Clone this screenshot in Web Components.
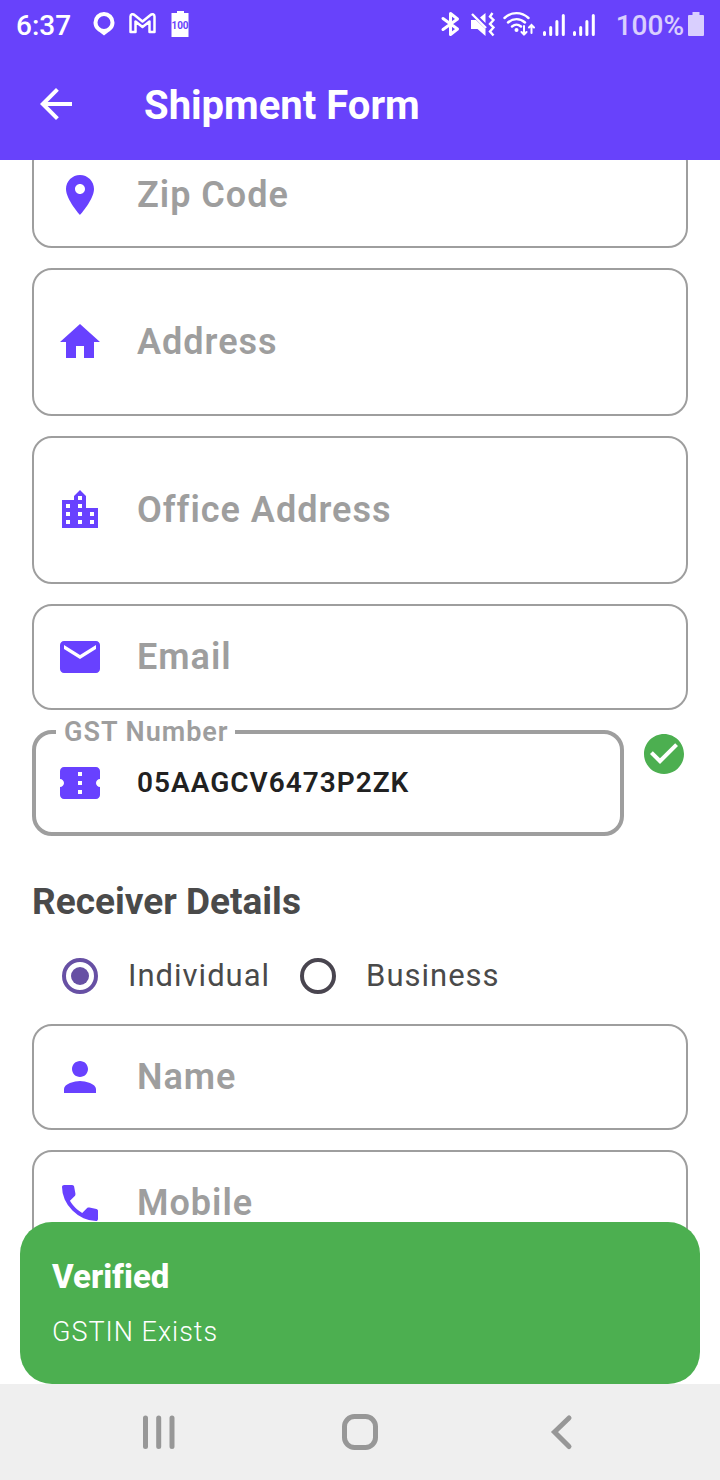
<!DOCTYPE html>
<html lang="en">
<head>
<meta charset="utf-8">
<meta name="viewport" content="width=device-width, initial-scale=1">
<title>Shipment Form</title>
<style>
  :root { --brand: #6842fb; --icon: #6841ff; --line: #9e9e9e; --success: #4caf50; }
  html, body { height: 100%; margin: 0; }
  body { font-family: Roboto, "Liberation Sans", sans-serif; background: #fff; color: #212121; }
</style>
</head>
<body>
<app-screen>
  <status-bar slot="top"></status-bar>
  <app-bar slot="top">Shipment Form</app-bar>
  <text-field icon="pin" label="Zip Code"></text-field>
  <text-field icon="home" label="Address" multiline></text-field>
  <text-field icon="city" label="Office Address" multiline></text-field>
  <text-field icon="mail" label="Email" type="email"></text-field>
  <verified-row>
    <text-field icon="ticket" label="GST Number" value="05AAGCV6473P2ZK" active></text-field>
  </verified-row>
  <receiver-type>Receiver Details</receiver-type>
  <text-field icon="person" label="Name"></text-field>
  <text-field icon="phone" label="Mobile" type="tel"></text-field>
  <snack-bar slot="toast">
    <span slot="title">Verified</span>
    <span>GSTIN Exists</span>
  </snack-bar>
  <nav-bar slot="bottom"></nav-bar>
</app-screen>

<script>
const ICONS = {
  pin: 'M12 2C8.13 2 5 5.13 5 9c0 5.25 7 13 7 13s7-7.75 7-13c0-3.87-3.13-7-7-7zm0 9.5c-1.38 0-2.5-1.12-2.5-2.5s1.12-2.5 2.5-2.5 2.5 1.12 2.5 2.5-1.12 2.5-2.5 2.5z',
  home: 'M10 20v-6h4v6h5v-8h3L12 3 2 12h3v8z',
  city: 'M15 11V5l-3-3-3 3v2H3v14h18V11h-6zm-8 8H5v-2h2v2zm0-4H5v-2h2v2zm0-4H5V9h2v2zm6 8h-2v-2h2v2zm0-4h-2v-2h2v2zm0-4h-2V9h2v2zm0-4h-2V5h2v2zm6 12h-2v-2h2v2zm0-4h-2v-2h2v2z',
  mail: 'M20 4H4c-1.1 0-1.99.9-1.99 2L2 18c0 1.1.9 2 2 2h16c1.1 0 2-.9 2-2V6c0-1.1-.9-2-2-2zm0 4l-8 5-8-5V6l8 5 8-5v2z',
  ticket: 'M22 10V6c0-1.11-.9-2-2-2H4c-1.1 0-1.99.89-1.99 2v4c1.1 0 1.99.9 1.99 2s-.89 2-2 2v4c0 1.1.9 2 2 2h16c1.1 0 2-.9 2-2v-4c-1.1 0-2-.9-2-2s.9-2 2-2zm-9 7.5h-2v-2h2v2zm0-4.5h-2v-2h2v2zm0-4.5h-2v-2h2v2z',
  person: 'M12 12c2.21 0 4-1.79 4-4s-1.79-4-4-4-4 1.79-4 4 1.79 4 4 4zm0 2c-2.67 0-8 1.34-8 4v2h16v-2c0-2.66-5.33-4-8-4z',
  phone: 'M19.95 21q-3.125 0-6.175-1.363-3.05-1.362-5.55-3.862-2.5-2.5-3.862-5.55Q3 7.175 3 4.05q0-.45.3-.75t.75-.3H8.1q.35 0 .625.238.275.237.325.562l.65 3.5q.05.4-.025.675-.075.275-.275.475L6.975 10.9q.5.925 1.187 1.787.688.863 1.513 1.663.775.775 1.625 1.438.85.662 1.8 1.212l2.35-2.35q.225-.225.588-.338.362-.112.712-.062l3.45.7q.35.1.575.363.225.262.225.587v4.05q0 .45-.3.75t-.75.3Z',
  back: 'M20 11H7.83l5.59-5.59L12 4l-8 8 8 8 1.41-1.41L7.83 13H20v-2z',
  check: 'M12 2C6.48 2 2 6.48 2 12s4.48 10 10 10 10-4.48 10-10S17.52 2 12 2zm-2 15l-5-5 1.41-1.41L10 14.17l7.59-7.59L19 8l-9 9z'
};

function define(name, markup, setup) {
  const template = document.createElement('template');
  customElements.define(name, class extends HTMLElement {
    constructor() {
      super();
      this.attachShadow({ mode: 'open' });
    }
    connectedCallback() {
      if (this.shadowRoot.childNodes.length) return;
      template.innerHTML = markup(this);
      this.shadowRoot.append(template.content.cloneNode(true));
      if (setup) setup(this, this.shadowRoot);
    }
  });
}

define('md-icon', el => `
  <style>
    :host { display: block; flex: none; width: 48px; height: 48px; color: var(--icon); }
    svg { display: block; width: 100%; height: 100%; fill: currentColor; }
  </style>
  <svg viewBox="0 0 24 24" aria-hidden="true"><path d="${ICONS[el.getAttribute('name')]}"/></svg>`);

define('app-screen', () => `
  <style>
    :host { display: flex; flex-direction: column; height: 100vh; }
    header, footer { flex: none; }
    main { flex: 1; min-height: 0; position: relative; overflow: hidden; }
    /* the list is scrolled a little: its first field runs under the app bar */
    form { display: flex; flex-direction: column; gap: 20px; margin: -18px 32px 0; }
    .toast { position: absolute; left: 20px; right: 20px; bottom: 0; }
  </style>
  <header><slot name="top"></slot></header>
  <main>
    <form><slot></slot></form>
    <div class="toast"><slot name="toast"></slot></div>
  </main>
  <footer><slot name="bottom"></slot></footer>`);

const SIGNAL = `<svg width="22" height="26" viewBox="0 0 22 26" aria-hidden="true">
  <g stroke="#fff" stroke-width="3" stroke-linecap="round"><path d="M1.5 21.5v2M7.7 16.500v7M13.9 10.500v13M20.3 4.500v19"/></g></svg>`;

define('status-bar', () => `
  <style>
    :host { display: flex; align-items: center; justify-content: space-between; height: 48px;
      padding: 0 16px; background: var(--brand); color: #fff; font-size: 28px; line-height: 34px; font-weight: 500; }
    div { display: flex; align-items: center; }
    .left { gap: 14px; }
    .right { gap: 8px; }
    time { margin-right: 8px; }
    time, .percent { padding-top: 4px; }
    svg { display: block; flex: none; }
    .level { display: flex; align-items: center; gap: 4px; margin-left: 13px; opacity: .75; }
  </style>
  <div class="left">
    <time>6:37</time>
    <svg width="22" height="26" viewBox="0 0 22 26" aria-hidden="true">
      <path fill="#fff" fill-rule="evenodd" d="M11 1A10.500 10.500 0 0 0 .5 11.500c0 4.500 2.500 7.500 6 9.500l4.500 3.500 4.500-3.500c3.500-2 6-5 6-9.500A10.500 10.500 0 0 0 11 1zm0 4a6.500 6.500 0 1 1 0 13 6.500 6.500 0 0 1 0-13z"/>
    </svg>
    <svg width="28" height="26" viewBox="0 0 28 26" aria-hidden="true">
      <path fill="none" stroke="#fff" stroke-width="2.500" stroke-linejoin="round" d="M1.500 21V5.500C1.500 3 4 2.500 5.500 4l8 6.500 8-6.500c1.500-1.500 4-1 4 1.500V21h-5V10.500l-7 5.500-7-5.500V21z"/>
    </svg>
    <svg width="18" height="28" viewBox="0 0 18 28" aria-hidden="true">
      <path fill="#fff" d="M6 1h7v2h4.500v24H.5V3H6z"/>
      <text x="9" y="19" text-anchor="middle" font-size="10" font-weight="700" fill="#6842fb">100</text>
    </svg>
  </div>
  <div class="right">
    <svg width="24" height="26" viewBox="0 0 24 26" aria-hidden="true">
      <path fill="none" stroke="#fff" stroke-width="3" stroke-linecap="round" stroke-linejoin="round" d="M5 7.500 19.500 18 12.500 23.500v-21L19.500 8 5 18.500"/>
    </svg>
    <svg width="25" height="26" viewBox="0 0 25 26" aria-hidden="true">
      <path fill="#fff" d="M1 9h5l9.500 9v7L7.500 18H1zM10 6.500 15.500 2v10z"/>
      <path fill="none" stroke="#fff" stroke-width="2.400" d="M2 3l14 14M22.500 2l-2.500 3.500 3.500 3.500-3.500 4 3.500 3.500-3.500 4 3.500 4"/>
    </svg>
    <svg width="32" height="26" viewBox="0 0 32 26" aria-hidden="true">
      <g fill="none" stroke="#fff" stroke-width="2.400" stroke-linecap="round">
        <path d="M1.500 7c7-6.500 17-6.500 24 0M5 11.500c5-4.500 12-4.500 17 0M9 15.500c3-2.500 6-2.500 9 0"/>
        <path stroke-width="2" d="M21 15v8.500M18.500 21l2.500 2.500 2.500-2.500M28.500 22v-8M26 16.500l2.500-2.500 2.500 2.500"/>
      </g>
      <circle cx="13.500" cy="19" r="2" fill="#fff"/>
    </svg>
    ${SIGNAL}${SIGNAL}
    <span class="level"><span class="percent">100%</span>
      <svg width="16" height="26" viewBox="0 0 16 26" aria-hidden="true"><path fill="#fff" d="M4.500 1h7v3H15q1 0 1 1v19q0 1-1 1H1q-1 0-1-1V5q0-1 1-1h3.500z"/></svg>
    </span>
  </div>`);

define('app-bar', () => `
  <style>
    :host { display: flex; align-items: center; gap: 64px; height: 112px; padding: 0 32px; background: var(--brand); color: #fff; }
    button { flex: none; padding: 0; border: 0; background: none; cursor: pointer; }
    md-icon { color: #fff; }
    h1 { margin: 0; padding-top: 4px; font-size: 40px; line-height: 48px; font-weight: 700; }
  </style>
  <button type="button" aria-label="Back"><md-icon name="back"></md-icon></button>
  <h1><slot></slot></h1>`);

define('text-field', el => {
  const multi = el.hasAttribute('multiline');
  const attrs = 'id="control" autocomplete="off"';
  return `
  <style>
    :host { display: block; flex: 1; min-width: 0; }
    .box { position: relative; box-sizing: border-box; display: flex; align-items: center; gap: 33px;
      height: 106px; padding: 0 22px; border: 2px solid var(--line); border-radius: 20px; }
    .box.multi { height: 148px; }
    .area { flex: 1; min-width: 0; display: grid; align-items: center; }
    label, input, textarea { grid-area: 1 / 1; }
    label { color: var(--line); font-size: 36px; line-height: 42px; font-weight: 600; letter-spacing: 1px; pointer-events: none; }
    input, textarea { box-sizing: border-box; width: 100%; margin: 0; padding: 0; border: 0; outline: 0; resize: none; background: none;
      color: #212121; font: 600 28px/42px Roboto, "Liberation Sans", sans-serif; letter-spacing: 1px; }
    .active { border-width: 4px; padding: 0 20px; }
    /* floated label breaks the outline */
    .active label { position: absolute; left: 20px; top: -18px; padding: 0 6px 0 8px; background: #fff; font-size: 27px; line-height: 32px; }
  </style>
  <div class="box${multi ? ' multi' : ''}${el.hasAttribute('active') ? ' active' : ''}">
    <md-icon name="${el.getAttribute('icon')}"></md-icon>
    <div class="area">
      <label for="control">${el.getAttribute('label')}</label>
      ${multi ? `<textarea ${attrs} rows="2"></textarea>`
              : `<input ${attrs} type="${el.getAttribute('type') || 'text'}" value="${el.getAttribute('value') || ''}">`}
    </div>
  </div>`;
}, (el, root) => {
  const control = root.querySelector('#control');
  const label = root.querySelector('label');
  control.addEventListener('input', () => {
    if (!el.hasAttribute('active')) label.hidden = control.value !== '';
  });
});

define('verified-row', () => `
  <style>
    :host { display: flex; align-items: flex-start; gap: 16px; }
    md-icon { color: var(--success); }
  </style>
  <slot></slot>
  <md-icon name="check" role="img" aria-label="Verified"></md-icon>`);

define('receiver-type', () => `
  <style>
    :host { display: block; margin-bottom: -20px; color: #4a4a4a; }
    h2 { margin: 0; padding: 25px 0 5px; font-size: 37px; line-height: 42px; font-weight: 700; }
    div { display: flex; align-items: center; height: 96px; }
    label { display: flex; align-items: center; font-size: 31px; line-height: 38px; letter-spacing: 1px; }
    input { appearance: none; box-sizing: border-box; width: 36px; height: 36px; margin: 0 30px; border: 4px solid #49454f; border-radius: 50%;
      display: grid; place-items: center; }
    input:checked { border-color: #6750a4; }
    input:checked::before { content: ""; width: 18px; height: 18px; border-radius: 50%; background: #6750a4; }
  </style>
  <h2><slot></slot></h2>
  <div role="radiogroup" aria-label="Receiver type">
    <label><input type="radio" name="receiver" checked>Individual</label>
    <label><input type="radio" name="receiver">Business</label>
  </div>`);

define('snack-bar', () => `
  <style>
    :host { display: flex; flex-direction: column; gap: 20px; padding: 36px 32px; border-radius: 32px; background: var(--success); color: #fff; }
    strong { font-size: 33px; line-height: 38px; font-weight: 800; font-variant-ligatures: none; }
    p { margin: 0; font-size: 27px; line-height: 32px; font-weight: 300; letter-spacing: 1px; }
  </style>
  <strong><slot name="title"></slot></strong>
  <p><slot></slot></p>`);

define('nav-bar', () => `
  <style>
    :host { display: flex; height: 96px; padding: 0 8%; background: #efefef; }
    button { flex: 1; display: grid; place-items: center; padding: 0; border: 0; background: none; cursor: pointer; }
    svg { width: 40px; height: 40px; fill: none; stroke: #979797; stroke-width: 5; stroke-linecap: round; }
  </style>
  <button type="button" aria-label="Recent apps"><svg viewBox="0 0 40 40"><path d="M7.500 6v28.500M20.700 6v28.500M34 6v28.500"/></svg></button>
  <button type="button" aria-label="Home"><svg viewBox="0 0 40 40"><rect x="4.500" y="4.500" width="31" height="31" rx="10"/></svg></button>
  <button type="button" aria-label="Back"><svg viewBox="0 0 40 40"><path d="M27 6 12.500 20 27 34.500"/></svg></button>`);
</script>
</body>
</html>
